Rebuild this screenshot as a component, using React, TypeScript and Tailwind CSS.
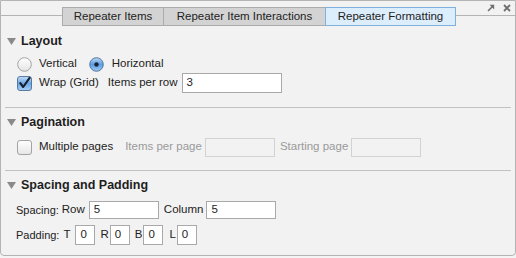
import React from "react";

const font = { fontFamily: '"Liberation Sans", Arial, sans-serif' };

function Triangle() {
  return (
    <svg width="9" height="7" viewBox="0 0 9 7" className="mr-[5px] mt-[1px]">
      <path d="M0 0 H9 L4.5 7 Z" fill="#8a8a8a" />
    </svg>
  );
}

function SectionHeader({ title }: { title: string }) {
  return (
    <div className="flex h-[18px] items-center pl-[6px]">
      <Triangle />
      <span className="text-[12.5px] font-bold text-[#1e1e1e]">{title}</span>
    </div>
  );
}

function Radio({ checked }: { checked?: boolean }) {
  return (
    <svg width="15" height="15" viewBox="0 0 15 15">
      <defs>
        <linearGradient id="ru" x1="0" y1="0" x2="0" y2="1">
          <stop offset="0" stopColor="#ffffff" />
          <stop offset="1" stopColor="#e4e4e4" />
        </linearGradient>
        <linearGradient id="rc" x1="0" y1="0" x2="0" y2="1">
          <stop offset="0" stopColor="#b9d6f3" />
          <stop offset="0.5" stopColor="#5d9ee3" />
          <stop offset="1" stopColor="#9cc8f2" />
        </linearGradient>
      </defs>
      <circle
        cx="7.5"
        cy="7.5"
        r="6.8"
        fill={checked ? "url(#rc)" : "url(#ru)"}
        stroke={checked ? "#4a6f99" : "#9a9a9a"}
        strokeWidth="0.9"
      />
      {checked && <circle cx="7.5" cy="7.5" r="2.2" fill="#1b2330" />}
    </svg>
  );
}

function Checkbox({ checked }: { checked?: boolean }) {
  return (
    <svg width="15" height="15" viewBox="0 0 15 15">
      <defs>
        <linearGradient id="cu" x1="0" y1="0" x2="0" y2="1">
          <stop offset="0" stopColor="#ffffff" />
          <stop offset="1" stopColor="#e6e6e6" />
        </linearGradient>
        <linearGradient id="cc" x1="0" y1="0" x2="0" y2="1">
          <stop offset="0" stopColor="#c3dcf5" />
          <stop offset="0.5" stopColor="#6aa6e6" />
          <stop offset="1" stopColor="#a8cff4" />
        </linearGradient>
      </defs>
      <rect
        x="0.5"
        y="0.5"
        width="14"
        height="14"
        rx="2.5"
        fill={checked ? "url(#cc)" : "url(#cu)"}
        stroke={checked ? "#4a6f99" : "#9a9a9a"}
        strokeWidth="0.9"
      />
      {checked && (
        <path
          d="M3.3 7.2 L6.2 11 L12.6 1.8"
          fill="none"
          stroke="#17202c"
          strokeWidth="2.1"
          strokeLinecap="round"
          strokeLinejoin="round"
        />
      )}
    </svg>
  );
}

function Field({
  value,
  className,
  disabled,
}: {
  value?: string;
  className: string;
  disabled?: boolean;
}) {
  return (
    <div
      className={`flex items-center border pl-[4px] text-[11.5px] ${
        disabled
          ? "border-[#d2d2d2] bg-[#f2f2f2]"
          : "border-[#a9a9a9] bg-white text-[#1e1e1e]"
      } ${className}`}
    >
      {value}
    </div>
  );
}

export default function App() {
  return (
    <div className="h-[258px] w-[516px] bg-[#f4f4f4]" style={font}>
      <div className="flex h-[256px] flex-col rounded-b-[4px] border border-[#b4b4b4] bg-[#f2f2f2] text-[11.5px] text-[#222]">
        {/* Title strip with panel controls */}
        <div className="flex h-[14px] items-start justify-end gap-[8px] pr-[4px] pt-[3px]">
          <svg width="8" height="8" viewBox="0 0 8 8">
            <path d="M1 7 L6.5 1.5" stroke="#6e6e6e" strokeWidth="1.6" />
            <path d="M2.5 0.8 H7.2 V5.5 Z" fill="#6e6e6e" />
          </svg>
          <svg width="8" height="8" viewBox="0 0 8 8">
            <path
              d="M1 1 L7 7 M7 1 L1 7"
              stroke="#6e6e6e"
              strokeWidth="1.8"
            />
          </svg>
        </div>
        <div className="h-px bg-[#b4b4b4]" />

        {/* Tabs */}
        <div className="relative -mt-[9px] ml-[61px] flex h-[19px]">
          <div className="flex w-[102px] items-center justify-center border border-[#ababab] bg-[#d3d3d3] text-[#222]">
            Repeater Items
          </div>
          <div className="flex w-[161px] items-center justify-center border-y border-[#ababab] bg-[#d3d3d3] text-[#222]">
            Repeater Item Interactions
          </div>
          <div className="flex w-[131px] items-center justify-center border border-[#7fb0de] bg-[#dcedfb] text-[#1e1e1e]">
            Repeater Formatting
          </div>
        </div>

        {/* Layout */}
        <div className="mt-[6px]">
          <SectionHeader title="Layout" />
        </div>
        <div className="mt-[6px] flex h-[16px] items-center pl-[16px]">
          <Radio />
          <span className="ml-[7px]">Vertical</span>
          <span className="ml-[12px] flex items-center">
            <Radio checked />
          </span>
          <span className="ml-[8px]">Horizontal</span>
        </div>
        <div className="mt-[1px] flex h-[20px] items-center pl-[16px]">
          <Checkbox checked />
          <span className="ml-[7px]">Wrap (Grid)</span>
          <span className="ml-[9px]">Items per row</span>
          <Field value="3" className="ml-[4px] h-[20px] w-[100px]" />
        </div>
        <div className="mx-[4px] mt-[14px] h-px bg-[#c2c2c2]" />

        {/* Pagination */}
        <div className="mt-[5px]">
          <SectionHeader title="Pagination" />
        </div>
        <div className="mt-[6px] flex h-[20px] items-center pl-[16px]">
          <Checkbox />
          <span className="ml-[7px]">Multiple pages</span>
          <span className="ml-[12px] text-[#9a9a9a]">Items per page</span>
          <Field disabled className="ml-[3px] h-[19px] w-[70px]" />
          <span className="ml-[5px] text-[#9a9a9a]">Starting page</span>
          <Field disabled className="ml-[3px] h-[19px] w-[70px]" />
        </div>
        <div className="mx-[4px] mt-[13px] h-px bg-[#c2c2c2]" />

        {/* Spacing and Padding */}
        <div className="mt-[5px]">
          <SectionHeader title="Spacing and Padding" />
        </div>
        <div className="mt-[7px] flex h-[18px] items-center pl-[15px]">
          <span className="text-[11px]">Spacing:</span>
          <span className="ml-[3px]">Row</span>
          <Field value="5" className="ml-[4px] h-[18px] w-[70px]" />
          <span className="ml-[5px]">Column</span>
          <Field value="5" className="ml-[3px] h-[18px] w-[70px]" />
        </div>
        <div className="mt-[6px] flex h-[20px] items-center pl-[15px]">
          <span className="text-[11px]">Padding:</span>
          <span className="ml-[4px]">T</span>
          <Field value="0" className="ml-[5px] h-[20px] w-[20px]" />
          <span className="ml-[5px]">R</span>
          <Field value="0" className="ml-[1px] h-[20px] w-[20px]" />
          <span className="ml-[5px]">B</span>
          <Field value="0" className="ml-[1px] h-[20px] w-[20px]" />
          <span className="ml-[6px]">L</span>
          <Field value="0" className="ml-[1px] h-[20px] w-[20px]" />
        </div>
      </div>
    </div>
  );
}
